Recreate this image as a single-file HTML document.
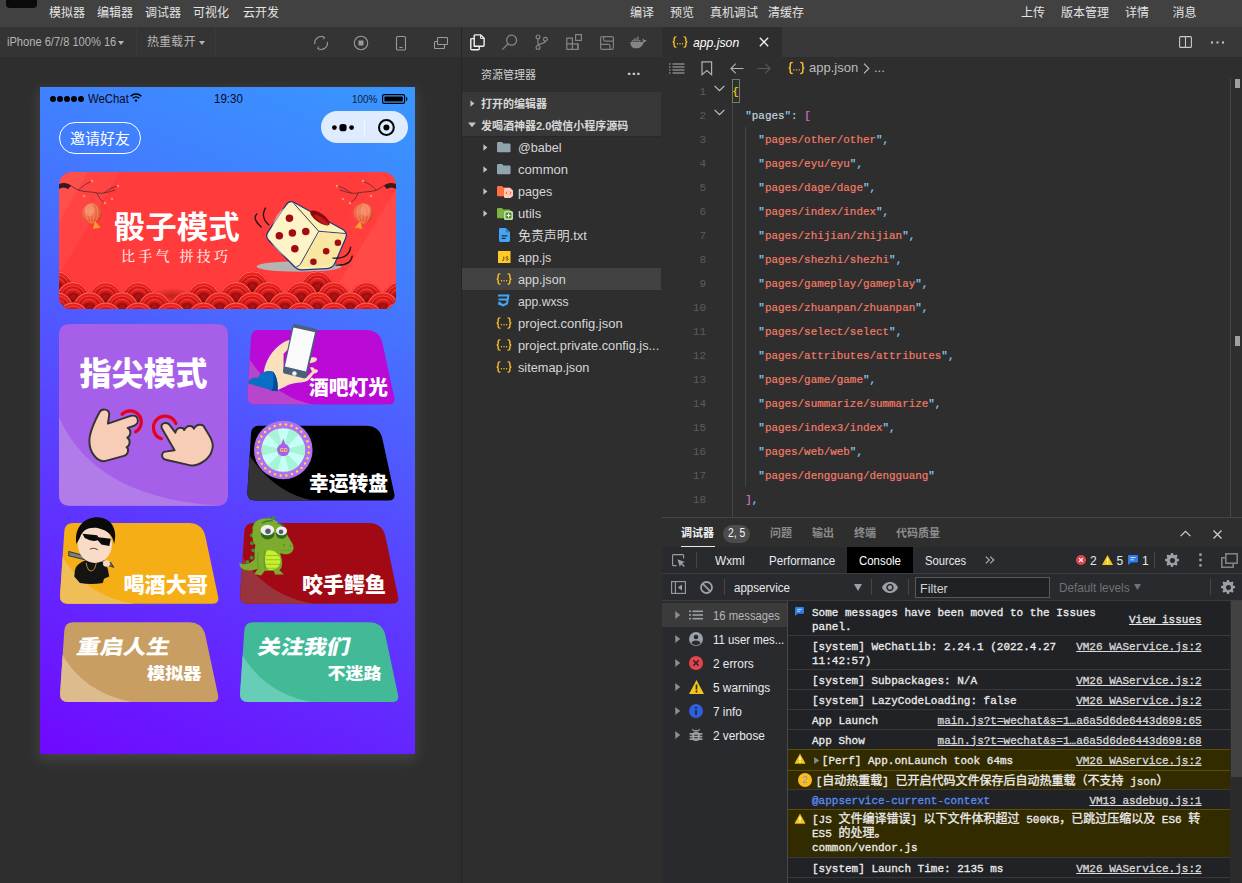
<!DOCTYPE html>
<html lang="zh-CN">
<head>
<meta charset="utf-8">
<title>微信开发者工具</title>
<style>
*{box-sizing:border-box;margin:0;padding:0}
html,body{width:1242px;height:883px;overflow:hidden;background:#2e2e2e}
body{position:relative;font-family:"Liberation Sans","Noto Sans CJK SC",sans-serif;font-size:12px;color:#ccc}
.abs{position:absolute}
.t{position:absolute;white-space:nowrap;line-height:1;transform-origin:0 50%}
svg{position:absolute;overflow:visible}
/* menubar */
#menubar{position:absolute;left:0;top:0;width:1242px;height:27px;background:#414141}
#menubar .t{top:7px;font-size:12px;color:#e4e4e4;line-height:13px}
/* simulator toolbar */
#simbar{position:absolute;left:0;top:27px;width:461px;height:30px;background:#343434}
#simbar .t{font-size:12px;color:#b4b4b4;top:9px;line-height:13px}
.tri{position:absolute;width:0;height:0;border-left:3.5px solid transparent;border-right:3.5px solid transparent;border-top:4.5px solid #b4b4b4}
#vsep{position:absolute;left:461px;top:27px;width:1px;height:856px;background:#252525}
/* explorer */
#actbar{position:absolute;left:462px;top:27px;width:200px;height:30px;background:#343434}
#explorer{position:absolute;left:462px;top:57px;width:199px;height:826px;background:#2e2e2e}
#explorer .sec{position:absolute;left:0;width:199px;height:22px;background:#383838}
#explorer .sec .t{left:19px;top:4.5px;font-size:12px;font-weight:bold;color:#d8d8d8;line-height:14px}
#explorer .row{position:absolute;left:0;width:199px;height:22px}
#explorer .row.sel{background:#424242}
#explorer .row .t{left:56px;top:4px;font-size:13px;color:#d6d6d6;line-height:15px}
/* editor */
#tabbar{position:absolute;left:662px;top:27px;width:580px;height:30px;background:#383838}
#tab{position:absolute;left:0;top:0;width:120px;height:30px;background:#2e2e2e}
#crumbs{position:absolute;left:662px;top:57px;width:580px;height:22px;background:#2e2e2e}
#code{position:absolute;left:662px;top:79px;width:580px;height:438px;background:#2e2e2e;overflow:hidden}
.ln{position:absolute;left:0;width:44px;text-align:right;font-family:"Liberation Mono",monospace;font-size:11px;color:#5c5c5c;line-height:24px;height:24px}
.cl{position:absolute;font-family:"Liberation Mono",monospace;font-size:10.9px;line-height:24px;height:24px;white-space:pre;color:#d4d4d4;-webkit-text-stroke:.2px}
.k{color:#c4d4dc}.q{color:#8ccff5}.s{color:#f47b67}.p{color:#d4d4d4}.b{color:#da70d6}
/* debugger */
#dbg{position:absolute;left:662px;top:517px;width:580px;height:366px;background:#2e2e2e;border-top:1px solid #454545}
#dbg .t{font-size:12px}
.mono{font-family:"Liberation Mono","Noto Sans CJK SC",monospace}
.crow{position:absolute;left:125.6px;width:442.4px;border-top:1px solid #38393c}
.crow.w{background:#332b00;border-top:1px solid #5e4e00;border-bottom:1px solid #5e4e00}
.crow.nb{border-bottom:0}
.crow .m{position:absolute;left:24.4px;margin-top:.6px;font-family:"Liberation Mono","Noto Sans CJK SC",monospace;font-size:11px;line-height:14px;color:#ececec;white-space:pre;-webkit-text-stroke:.3px}
.crow .l{position:absolute;right:28.4px;margin-top:.6px;font-family:"Liberation Mono",monospace;font-size:11px;line-height:14px;color:#d8d8d8;white-space:pre;text-decoration:underline;-webkit-text-stroke:.3px}
.srow{position:absolute;left:0;width:124.6px;height:24px}
.srow .t{left:51px;top:6px;font-size:12.5px;color:#e0e0e0;line-height:15px;transform:scaleX(.985)}
.crow .c{font-size:12px}
#phone{position:absolute;left:40px;top:87px;width:375px;height:667px;overflow:hidden;background:linear-gradient(204deg,#3898ff 0%,#427cff 25%,#5a40ff 61%,#7008ff 100%);}
#phshadow{position:absolute;left:40px;top:87px;width:375px;height:667px;box-shadow:0 5px 12px 2px rgba(255,255,255,.10)}
#phone .w{color:#fff;font-weight:900;font-family:"Liberation Sans","Noto Sans CJK SC",sans-serif}
</style>
</head>
<body>

<div id="menubar">
  <div class="abs" style="left:6px;top:-8px;width:31px;height:16px;border-radius:4px;background:#0a0a0a"></div>
  <span class="t" style="left:49px">模拟器</span>
  <span class="t" style="left:97px">编辑器</span>
  <span class="t" style="left:145px">调试器</span>
  <span class="t" style="left:193px">可视化</span>
  <span class="t" style="left:243px">云开发</span>
  <span class="t" style="left:630px">编译</span>
  <span class="t" style="left:670px">预览</span>
  <span class="t" style="left:710px">真机调试</span>
  <span class="t" style="left:768px">清缓存</span>
  <span class="t" style="left:1021px">上传</span>
  <span class="t" style="left:1061px">版本管理</span>
  <span class="t" style="left:1125px">详情</span>
  <span class="t" style="left:1172.6px">消息</span>
</div>
<div id="simbar">
  <span class="t" style="left:7px;transform:scaleX(.925)">iPhone 6/7/8 100% 16</span>
  <i class="tri" style="left:118px;top:13.5px"></i>
  <div class="abs" style="left:136px;top:0;width:1px;height:30px;background:#3a3a3a"></div>
  <span class="t" style="left:147px;word-spacing:-2.6px">热重载 开</span>
  <i class="tri" style="left:198.5px;top:14px"></i>
  <div class="abs" style="left:215px;top:0;width:1px;height:30px;background:#3a3a3a"></div>
  <!-- refresh -->
  <svg style="left:313px;top:8px" width="16" height="16" viewBox="0 0 16 16" fill="none" stroke="#9a9a9a" stroke-width="1.1">
    <path d="M1.9 9.2A6.3 6.3 0 0 1 11.4 2.6"/><path d="M14.3 6.8A6.3 6.3 0 0 1 4.8 13.4"/>
    <path d="M9.8 1.3l1.9 1.3l-1.2 1.9" stroke-width=".9"/><path d="M6.4 14.7l-1.9-1.3l1.2-1.9" stroke-width=".9"/>
  </svg>
  <!-- stop -->
  <svg style="left:353px;top:8px" width="16" height="16" viewBox="0 0 16 16" fill="none" stroke="#9a9a9a" stroke-width="1.1">
    <circle cx="8" cy="8" r="6.7"/><rect x="5.5" y="5.5" width="5" height="5" fill="#9a9a9a" stroke="none"/>
  </svg>
  <!-- phone -->
  <svg style="left:393px;top:8px" width="16" height="16" viewBox="0 0 16 16" fill="none" stroke="#9a9a9a" stroke-width="1.1">
    <rect x="3.5" y="1.5" width="9" height="13.5" rx="1.3"/><path d="M6.3 12.5h3.4"/>
  </svg>
  <!-- windows -->
  <svg style="left:433px;top:8px" width="16" height="16" viewBox="0 0 16 16" fill="none" stroke="#9a9a9a" stroke-width="1.1">
    <rect x="4.5" y="2.5" width="10" height="7" rx="0.8"/><path d="M4.5 6.5h-2.2a.8.8 0 0 0-.8.8v5.4a.8.8 0 0 0 .8.8h8.4a.8.8 0 0 0 .8-.8v-2.7"/>
  </svg>
</div>
<div id="vsep"></div>
<div id="actbar">
  <!-- files (active) : abs x 470-485, y 34-50 -->
  <svg style="left:7px;top:7px" width="17" height="17" viewBox="0 0 17 17" fill="none" stroke="#f2f2f2" stroke-width="1.4" stroke-linejoin="round">
    <path d="M5.2 12.2V1.8a.9.9 0 0 1 .9-.9h5.6l3.4 3.4v7a.9.9 0 0 1-.9.9z"/>
    <path d="M11.6 1v3.4h3.4" stroke-width="1"/>
    <path d="M5.2 4.6H2.7a.9.9 0 0 0-.9.9v9.3a.9.9 0 0 0 .9.9h6.6a.9.9 0 0 0 .9-.9v-2.6"/>
  </svg>
  <!-- search : circle centre abs (511.6,40.2) -->
  <svg style="left:39px;top:7px" width="17" height="17" viewBox="0 0 17 17" fill="none" stroke="#858585" stroke-width="1.3">
    <circle cx="10.6" cy="6.2" r="5"/><path d="M7 9.8L1.4 15.6"/>
  </svg>
  <!-- git -->
  <svg style="left:71px;top:7px" width="17" height="17" viewBox="0 0 17 17" fill="none" stroke="#858585" stroke-width="1.2">
    <circle cx="5" cy="2.9" r="1.9"/><circle cx="5" cy="13.4" r="1.9"/><circle cx="12.4" cy="5.2" r="1.9"/>
    <path d="M5 4.8v6.7"/><path d="M12.4 7.1c0 3.4-7.2 1.6-7.4 4.6"/>
  </svg>
  <!-- extensions -->
  <svg style="left:103px;top:7px" width="17" height="17" viewBox="0 0 17 17" fill="none" stroke="#858585" stroke-width="1.2">
    <path d="M1.8 4.2h5.6v11.2h-5.6zM1.8 9.8h11.2v5.6h-5.6"/><path d="M13 9.8v5.6"/>
    <rect x="10.6" y=".6" width="5.8" height="5.8"/>
  </svg>
  <!-- save -->
  <svg style="left:138px;top:9px" width="14" height="14" viewBox="0 0 14 14" fill="none" stroke="#808080" stroke-width="1.2">
    <rect x=".6" y=".6" width="12.8" height="12.8" rx="1.4"/><path d="M3.7.6v2.8a1.7 1.7 0 0 0 1.7 1.7h8"/><path d="M.6 8.3h7.7a1.7 1.7 0 0 1 1.7 1.7v3.4"/>
  </svg>
  <!-- docker whale -->
  <svg style="left:167.6px;top:9px" width="17" height="12.5" viewBox="0 0 17 12.5" fill="#858585" stroke="none">
    <path d="M.3 5.9h11.6c.6-.1.9-.5 1-1c-.5-.8-.4-1.7.2-2.4c.7.4 1 1 1.1 1.7c.8-.2 1.6-.1 2.3.3c-.4 1-1.3 1.5-2.5 1.4c-1.1 3.6-3.6 6.4-7.6 6.4c-4.2 0-6.1-2.6-6.1-6.4z"/><rect x="1.8" y="4.1" width="1.5" height="1.4"/><rect x="3.6" y="4.1" width="1.5" height="1.4"/><rect x="5.4" y="4.1" width="1.5" height="1.4"/><rect x="7.2" y="4.1" width="1.5" height="1.4"/><rect x="9" y="4.1" width="1.5" height="1.4"/><rect x="3.6" y="2.4" width="1.5" height="1.4"/><rect x="5.4" y="2.4" width="1.5" height="1.4"/><rect x="7.2" y="2.4" width="1.5" height="1.4"/><rect x="7.2" y="0.7" width="1.5" height="1.4"/>
  </svg>
</div>

<div id="explorer">
<span class="t" style="left:19px;top:12px;font-size:11px;color:#d0d0d0;line-height:13px">资源管理器</span>
<span class="t" style="left:165px;top:6px;font-size:15px;font-weight:bold;color:#d0d0d0;letter-spacing:0.5px;line-height:13px">...</span>
<div class="sec" style="top:35px"><svg style="left:8px;top:7.5px" width="5" height="7" viewBox="0 0 6 8"><path d="M.5 0L5.2 4L.5 8z" fill="#c5c5c5"/></svg><span class="t" style="font-size:11px">打开的编辑器</span></div>
<div class="abs" style="left:0;top:56.5px;width:199px;height:1px;background:#303030"></div>
<div class="sec" style="top:57px"><svg style="left:6px;top:8px" width="8" height="6" viewBox="0 0 8 6"><path d="M0 .5L4 5.2L8 .5z" fill="#c5c5c5"/></svg><span class="t" style="font-size:11px">发喝酒神器2.0微信小程序源码</span></div>
<div class="abs" style="left:0;top:79px;width:199px;height:2px;background:linear-gradient(#272727,#2e2e2e)"></div>
<div class="row" style="top:79px"><svg style="left:21px;top:7.5px" width="5" height="7" viewBox="0 0 6 8"><path d="M.5 0L5.2 4L.5 8z" fill="#c5c5c5"/></svg><svg style="left:35px;top:6px" width="14" height="11" viewBox="0 0 15 12" preserveAspectRatio="none"><path d="M1.2 0h4.2l1.5 1.6h6.4a1.2 1.2 0 0 1 1.2 1.2v7.2a1.2 1.2 0 0 1-1.2 1.2h-12.1a1.2 1.2 0 0 1-1.2-1.2v-8.8a1.2 1.2 0 0 1 1.2-1.2z" fill="#90a4ae"/></svg><span class="t" style="transform:scaleX(0.967)">@babel</span></div>
<div class="row" style="top:101px"><svg style="left:21px;top:7.5px" width="5" height="7" viewBox="0 0 6 8"><path d="M.5 0L5.2 4L.5 8z" fill="#c5c5c5"/></svg><svg style="left:35px;top:6px" width="14" height="11" viewBox="0 0 15 12" preserveAspectRatio="none"><path d="M1.2 0h4.2l1.5 1.6h6.4a1.2 1.2 0 0 1 1.2 1.2v7.2a1.2 1.2 0 0 1-1.2 1.2h-12.1a1.2 1.2 0 0 1-1.2-1.2v-8.8a1.2 1.2 0 0 1 1.2-1.2z" fill="#90a4ae"/></svg><span class="t" style="transform:scaleX(1.006)">common</span></div>
<div class="row" style="top:123px"><svg style="left:21px;top:7.5px" width="5" height="7" viewBox="0 0 6 8"><path d="M.5 0L5.2 4L.5 8z" fill="#c5c5c5"/></svg><svg style="left:35px;top:6px" width="14" height="11" viewBox="0 0 15 12" preserveAspectRatio="none"><path d="M1.2 0h4.2l1.5 1.6h6.4a1.2 1.2 0 0 1 1.2 1.2v7.2a1.2 1.2 0 0 1-1.2 1.2h-12.1a1.2 1.2 0 0 1-1.2-1.2v-8.8a1.2 1.2 0 0 1 1.2-1.2z" fill="#ff7043"/></svg><svg style="left:42px;top:8px" width="9" height="10" viewBox="0 0 9 10"><path d="M1.2 0h5.2l2.6 2.4v5.6l-2.6 2h-5.2a1.2 1.2 0 0 1-1.2-1.2v-7.6a1.2 1.2 0 0 1 1.2-1.2z" fill="#ffccbc"/><path d="M3.4 3.6l-1.5 1.4l1.5 1.4M5.6 3.6l1.5 1.4l-1.5 1.4" stroke="#ff5722" stroke-width=".9" fill="none"/></svg><span class="t" style="transform:scaleX(0.966)">pages</span></div>
<div class="row" style="top:145px"><svg style="left:21px;top:7.5px" width="5" height="7" viewBox="0 0 6 8"><path d="M.5 0L5.2 4L.5 8z" fill="#c5c5c5"/></svg><svg style="left:35px;top:6px" width="14" height="11" viewBox="0 0 15 12" preserveAspectRatio="none"><path d="M1.2 0h4.2l1.5 1.6h6.4a1.2 1.2 0 0 1 1.2 1.2v7.2a1.2 1.2 0 0 1-1.2 1.2h-12.1a1.2 1.2 0 0 1-1.2-1.2v-8.8a1.2 1.2 0 0 1 1.2-1.2z" fill="#7cb342"/></svg><svg style="left:42px;top:9px" width="9" height="9" viewBox="0 0 9 9"><rect width="9" height="9" rx="1.6" fill="#c5e1a5"/><rect x="1.6" y="1.6" width="5.8" height="5.8" rx=".8" fill="#558b2f"/><path d="M4.5 2.6v3.8M2.6 4.5h3.8" stroke="#fff" stroke-width="1.1"/></svg><span class="t" style="transform:scaleX(1.004)">utils</span></div>
<div class="row" style="top:167px"><svg style="left:37px;top:4px" width="11" height="14" viewBox="0 0 11 14"><path d="M1.4 0h5.6l4 4v8.6a1.4 1.4 0 0 1-1.4 1.4h-8.2a1.4 1.4 0 0 1-1.4-1.4v-11.2a1.4 1.4 0 0 1 1.4-1.4z" fill="#42a5f5"/><path d="M6.6.8v3.6h3.6" fill="#2e2e2e" opacity=".0"/><path d="M2.6 7.8h5.8M2.6 10.4h4" stroke="#2e2e2e" stroke-width="1.3"/><path d="M6.8 0v4.2h4.2z" fill="#2e2e2e" opacity=".35"/></svg><span class="t" style="transform:scaleX(0.993)">免责声明.txt</span></div>
<div class="row" style="top:189px"><svg style="left:35.7px;top:5px" width="12.5" height="12" viewBox="0 0 13 12" preserveAspectRatio="none"><rect width="13" height="12" fill="#ffca28"/><path d="M6 5.6v3.2c0 .9-1.2 1-1.7.3M10.6 6.1c-.7-.7-2.2-.5-2.2.4c0 1 2.3.7 2.3 1.8c0 1-1.7 1.1-2.5.3" stroke="#4e3c00" stroke-width=".9" fill="none"/></svg><span class="t" style="transform:scaleX(0.96)">app.js</span></div>
<div class="row sel" style="top:211px"><svg style="left:33.6px;top:4px" width="16" height="14" viewBox="0 0 18 14" fill="none" stroke="#f4bb2e" stroke-width="1.6" stroke-linecap="round">
<path d="M4.4 1.2c-1.6 0-2 .6-2 1.8v2.2c0 1-.5 1.6-1.5 1.8c1 .2 1.5.8 1.5 1.8v2.2c0 1.2.4 1.8 2 1.8"/>
<path d="M13.6 1.2c1.6 0 2 .6 2 1.8v2.2c0 1 .5 1.6 1.5 1.8c-1 .2-1.5.8-1.5 1.8v2.2c0 1.2-.4 1.8-2 1.8"/>
<path d="M6.1 9h.1M9 9h.1M11.9 9h.1" stroke-width="1.5"/></svg><span class="t" style="transform:scaleX(0.97)">app.json</span></div>
<div class="row" style="top:233px"><svg style="left:34.2px;top:4px" width="14" height="13" viewBox="0 0 14 13"><path d="M2.2.4h11.4l-1.7 9.8l-4.6 2.4l-5.4-2.2l.5-2.6h2.3l-.2 1l3 1.2l2.6-1.2l.4-2.2h-8.2l.4-2.2h8.2l.3-1.8h-9.4z" fill="#42a5f5"/></svg><span class="t" style="transform:scaleX(0.935)">app.wxss</span></div>
<div class="row" style="top:255px"><svg style="left:33.6px;top:4px" width="16" height="14" viewBox="0 0 18 14" fill="none" stroke="#f4bb2e" stroke-width="1.6" stroke-linecap="round">
<path d="M4.4 1.2c-1.6 0-2 .6-2 1.8v2.2c0 1-.5 1.6-1.5 1.8c1 .2 1.5.8 1.5 1.8v2.2c0 1.2.4 1.8 2 1.8"/>
<path d="M13.6 1.2c1.6 0 2 .6 2 1.8v2.2c0 1 .5 1.6 1.5 1.8c-1 .2-1.5.8-1.5 1.8v2.2c0 1.2-.4 1.8-2 1.8"/>
<path d="M6.1 9h.1M9 9h.1M11.9 9h.1" stroke-width="1.5"/></svg><span class="t" style="transform:scaleX(0.999)">project.config.json</span></div>
<div class="row" style="top:277px"><svg style="left:33.6px;top:4px" width="16" height="14" viewBox="0 0 18 14" fill="none" stroke="#f4bb2e" stroke-width="1.6" stroke-linecap="round">
<path d="M4.4 1.2c-1.6 0-2 .6-2 1.8v2.2c0 1-.5 1.6-1.5 1.8c1 .2 1.5.8 1.5 1.8v2.2c0 1.2.4 1.8 2 1.8"/>
<path d="M13.6 1.2c1.6 0 2 .6 2 1.8v2.2c0 1 .5 1.6 1.5 1.8c-1 .2-1.5.8-1.5 1.8v2.2c0 1.2-.4 1.8-2 1.8"/>
<path d="M6.1 9h.1M9 9h.1M11.9 9h.1" stroke-width="1.5"/></svg><span class="t" style="transform:scaleX(0.982)">project.private.config.js...</span></div>
<div class="row" style="top:299px"><svg style="left:33.6px;top:4px" width="16" height="14" viewBox="0 0 18 14" fill="none" stroke="#f4bb2e" stroke-width="1.6" stroke-linecap="round">
<path d="M4.4 1.2c-1.6 0-2 .6-2 1.8v2.2c0 1-.5 1.6-1.5 1.8c1 .2 1.5.8 1.5 1.8v2.2c0 1.2.4 1.8 2 1.8"/>
<path d="M13.6 1.2c1.6 0 2 .6 2 1.8v2.2c0 1 .5 1.6 1.5 1.8c-1 .2-1.5.8-1.5 1.8v2.2c0 1.2-.4 1.8-2 1.8"/>
<path d="M6.1 9h.1M9 9h.1M11.9 9h.1" stroke-width="1.5"/></svg><span class="t" style="transform:scaleX(0.978)">sitemap.json</span></div>
</div>
<div id="tabbar"><div id="tab">
<svg style="left:10px;top:8px" width="16" height="14" viewBox="0 0 18 14" fill="none" stroke="#f4bb2e" stroke-width="1.6" stroke-linecap="round">
<path d="M4.4 1.2c-1.6 0-2 .6-2 1.8v2.2c0 1-.5 1.6-1.5 1.8c1 .2 1.5.8 1.5 1.8v2.2c0 1.2.4 1.8 2 1.8"/>
<path d="M13.6 1.2c1.6 0 2 .6 2 1.8v2.2c0 1 .5 1.6 1.5 1.8c-1 .2-1.5.8-1.5 1.8v2.2c0 1.2-.4 1.8-2 1.8"/>
<path d="M6.1 9h.1M9 9h.1M11.9 9h.1" stroke-width="1.5"/></svg>
<span class="t" style="left:31px;top:8px;font-size:13px;font-style:italic;color:#fff;line-height:15px;transform:scaleX(.94)">app.json</span>
<svg style="left:97.3px;top:10px" width="10" height="10" viewBox="0 0 10 10" stroke="#f0f0f0" stroke-width="1.3" fill="none"><path d="M.8.8l8.4 8.4M9.2.8L.8 9.2"/></svg>
</div>
<svg style="left:517px;top:9px" width="13" height="12" viewBox="0 0 13 12" fill="none" stroke="#c8c8c8" stroke-width="1.1"><rect x=".6" y=".6" width="11.8" height="10.8" rx="1"/><path d="M6.5 .6v10.8"/></svg>
<svg style="left:549px;top:14px" width="14" height="3" viewBox="0 0 14 3" fill="#c8c8c8"><rect x="0" y=".5" width="2" height="2"/><rect x="5.5" y=".5" width="2" height="2"/><rect x="11" y=".5" width="2" height="2"/></svg>
</div>
<div id="crumbs">
<svg style="left:7px;top:6px" width="16" height="11" viewBox="0 0 16 11" stroke="#b0b0b0" stroke-width="1" fill="none"><path d="M3.5 1h12M3.5 4h12M3.5 7h12M3.5 10h12M0 1h1.5M0 4h1.5M0 7h1.5M0 10h1.5"/></svg>
<svg style="left:39px;top:4px" width="12" height="15" viewBox="0 0 12 15" stroke="#b0b0b0" stroke-width="1.2" fill="none" stroke-linejoin="miter"><path d="M1 .8h9.6v13l-4.8-4.2l-4.8 4.2z"/></svg>
<svg style="left:68px;top:6px" width="14" height="11" viewBox="0 0 14 11" stroke="#b0b0b0" stroke-width="1.1" fill="none"><path d="M13.5 5.5H1M5.8 .6L.9 5.5l4.9 4.9"/></svg>
<svg style="left:95px;top:6px" width="14" height="11" viewBox="0 0 14 11" stroke="#5a5a5a" stroke-width="1.1" fill="none"><path d="M.5 5.5H13M8.2 .6l4.9 4.9l-4.9 4.9"/></svg>
<svg style="left:126px;top:4px" width="17" height="14" viewBox="0 0 18 14" fill="none" stroke="#f4bb2e" stroke-width="1.6" stroke-linecap="round">
<path d="M4.4 1.2c-1.6 0-2 .6-2 1.8v2.2c0 1-.5 1.6-1.5 1.8c1 .2 1.5.8 1.5 1.8v2.2c0 1.2.4 1.8 2 1.8"/>
<path d="M13.6 1.2c1.6 0 2 .6 2 1.8v2.2c0 1 .5 1.6 1.5 1.8c-1 .2-1.5.8-1.5 1.8v2.2c0 1.2-.4 1.8-2 1.8"/>
<path d="M6.1 9h.1M9 9h.1M11.9 9h.1" stroke-width="1.5"/></svg>
<span class="t" style="left:147px;top:3px;font-size:13px;color:#bdbdbd;line-height:15px">app.json</span>
<svg style="left:201px;top:6px" width="7" height="11" viewBox="0 0 7 11" stroke="#bdbdbd" stroke-width="1.1" fill="none"><path d="M1 .7l4.8 4.8L1 10.3"/></svg>
<span class="t" style="left:212px;top:3px;font-size:13px;color:#bdbdbd;line-height:15px">...</span>
</div>
<div id="code">
<div class="abs" style="left:70px;top:0;width:7.5px;height:24px;border:1px solid #777;background:rgba(0,100,0,.1)"></div>
<div class="abs" style="left:70px;top:24px;width:1px;height:420px;background:#454545"></div>
<div class="abs" style="left:83px;top:48px;width:1px;height:360px;background:#454545"></div>
<div class="ln" style="top:0.5px">1</div>
<div class="cl" style="left:70.2px;top:1px"><span style="color:#ffd700">{</span></div>
<div class="ln" style="top:24.5px">2</div>
<div class="cl" style="left:70.2px;top:25px">  <span class="q">"</span><span class="k">pages</span><span class="q">":</span> <span class="b">[</span></div>
<div class="ln" style="top:48.5px">3</div>
<div class="cl" style="left:70.2px;top:49px">    <span class="q">"</span><span class="s">pages/other/other</span><span class="q">"</span><span class="q">,</span></div>
<div class="ln" style="top:72.5px">4</div>
<div class="cl" style="left:70.2px;top:73px">    <span class="q">"</span><span class="s">pages/eyu/eyu</span><span class="q">"</span><span class="q">,</span></div>
<div class="ln" style="top:96.5px">5</div>
<div class="cl" style="left:70.2px;top:97px">    <span class="q">"</span><span class="s">pages/dage/dage</span><span class="q">"</span><span class="q">,</span></div>
<div class="ln" style="top:120.5px">6</div>
<div class="cl" style="left:70.2px;top:121px">    <span class="q">"</span><span class="s">pages/index/index</span><span class="q">"</span><span class="q">,</span></div>
<div class="ln" style="top:144.5px">7</div>
<div class="cl" style="left:70.2px;top:145px">    <span class="q">"</span><span class="s">pages/zhijian/zhijian</span><span class="q">"</span><span class="q">,</span></div>
<div class="ln" style="top:168.5px">8</div>
<div class="cl" style="left:70.2px;top:169px">    <span class="q">"</span><span class="s">pages/shezhi/shezhi</span><span class="q">"</span><span class="q">,</span></div>
<div class="ln" style="top:192.5px">9</div>
<div class="cl" style="left:70.2px;top:193px">    <span class="q">"</span><span class="s">pages/gameplay/gameplay</span><span class="q">"</span><span class="q">,</span></div>
<div class="ln" style="top:216.5px">10</div>
<div class="cl" style="left:70.2px;top:217px">    <span class="q">"</span><span class="s">pages/zhuanpan/zhuanpan</span><span class="q">"</span><span class="q">,</span></div>
<div class="ln" style="top:240.5px">11</div>
<div class="cl" style="left:70.2px;top:241px">    <span class="q">"</span><span class="s">pages/select/select</span><span class="q">"</span><span class="q">,</span></div>
<div class="ln" style="top:264.5px">12</div>
<div class="cl" style="left:70.2px;top:265px">    <span class="q">"</span><span class="s">pages/attributes/attributes</span><span class="q">"</span><span class="q">,</span></div>
<div class="ln" style="top:288.5px">13</div>
<div class="cl" style="left:70.2px;top:289px">    <span class="q">"</span><span class="s">pages/game/game</span><span class="q">"</span><span class="q">,</span></div>
<div class="ln" style="top:312.5px">14</div>
<div class="cl" style="left:70.2px;top:313px">    <span class="q">"</span><span class="s">pages/summarize/summarize</span><span class="q">"</span><span class="q">,</span></div>
<div class="ln" style="top:336.5px">15</div>
<div class="cl" style="left:70.2px;top:337px">    <span class="q">"</span><span class="s">pages/index3/index</span><span class="q">"</span><span class="q">,</span></div>
<div class="ln" style="top:360.5px">16</div>
<div class="cl" style="left:70.2px;top:361px">    <span class="q">"</span><span class="s">pages/web/web</span><span class="q">"</span><span class="q">,</span></div>
<div class="ln" style="top:384.5px">17</div>
<div class="cl" style="left:70.2px;top:385px">    <span class="q">"</span><span class="s">pages/dengguang/dengguang</span><span class="q">"</span></div>
<div class="ln" style="top:408.5px">18</div>
<div class="cl" style="left:70.2px;top:409px">  <span class="b">]</span><span class="q">,</span></div>
<svg style="left:52px;top:6px" width="11" height="7" viewBox="0 0 11 7" stroke="#c5c5c5" stroke-width="1.1" fill="none"><path d="M.6 .8l4.9 4.9l4.9-4.9"/></svg>
<svg style="left:52px;top:30px" width="11" height="7" viewBox="0 0 11 7" stroke="#c5c5c5" stroke-width="1.1" fill="none"><path d="M.6 .8l4.9 4.9l4.9-4.9"/></svg>
<div class="abs" style="left:568px;top:0;width:1px;height:438px;background:#484848"></div>
<div class="abs" style="left:573px;top:0;width:5px;height:9px;background:#a0a0a0"></div>
<div class="abs" style="left:573px;top:257px;width:5px;height:10px;background:#a0a0a0"></div>
</div>
<div id="dbg">
<span class="t" style="left:19px;top:9px;font-size:11px;font-weight:bold;color:#f0f0f0;line-height:13px">调试器</span>
<div class="abs" style="left:19px;top:28px;width:34px;height:1px;background:#e8e8e8"></div>
<div class="abs" style="left:61px;top:6.5px;width:27px;height:18px;border-radius:9px;background:#4c4c4c"></div>
<span class="t" style="left:65.6px;top:8.6px;font-size:12px;color:#f4f4f4;line-height:13px;transform:scaleX(.86)">2, 5</span>
<span class="t" style="left:108px;top:9px;font-size:11px;font-weight:bold;color:#8c8c8c;line-height:13px">问题</span>
<span class="t" style="left:150px;top:9px;font-size:11px;font-weight:bold;color:#8c8c8c;line-height:13px">输出</span>
<span class="t" style="left:192px;top:9px;font-size:11px;font-weight:bold;color:#8c8c8c;line-height:13px">终端</span>
<span class="t" style="left:234px;top:9px;font-size:11px;font-weight:bold;color:#8c8c8c;line-height:13px">代码质量</span>
<svg style="left:518px;top:12px" width="11" height="7" viewBox="0 0 11 7" stroke="#d0d0d0" stroke-width="1.2" fill="none"><path d="M.6 6.2l4.9-4.9l4.9 4.9"/></svg>
<svg style="left:551px;top:12px" width="9" height="9" viewBox="0 0 9 9" stroke="#d0d0d0" stroke-width="1.2" fill="none"><path d="M.5.5l8 8M8.5.5l-8 8"/></svg>
<div class="abs" style="left:0;top:29px;width:580px;height:27px;background:#292a2d;border-bottom:1px solid #3d3d3d"></div>
<svg style="left:10px;top:36px" width="14" height="14" viewBox="0 0 14 14" fill="none" stroke="#9aa0a6" stroke-width="1.1"><path d="M11.6 4.4V1.3a.7.7 0 0 0-.7-.7H1.3a.7.7 0 0 0-.7.7v9.6a.7.7 0 0 0 .7.7h3.1"/><path d="M5.4 5.2l2.4 7.6l1.4-2.6l2.6 2.8l1-1l-2.7-2.7l2.6-1.4z" fill="#9aa0a6" stroke="none"/></svg>
<div class="abs" style="left:33.8px;top:34px;width:1px;height:16px;background:#46474a"></div>
<div class="abs" style="left:185px;top:29px;width:66px;height:26px;background:#000"></div>
<span class="t" style="left:53px;top:36px;font-size:12px;color:#e8eaed;line-height:14px;transform:scaleX(0.985)">Wxml</span>
<span class="t" style="left:107px;top:36px;font-size:12px;color:#e8eaed;line-height:14px;transform:scaleX(0.963)">Performance</span>
<span class="t" style="left:197px;top:36px;font-size:12px;color:#fff;line-height:14px;transform:scaleX(0.953)">Console</span>
<span class="t" style="left:263px;top:36px;font-size:12px;color:#e8eaed;line-height:14px;transform:scaleX(0.935)">Sources</span>
<svg style="left:323px;top:38px" width="10" height="8" viewBox="0 0 10 8" stroke="#b0b3b8" stroke-width="1.1" fill="none"><path d="M.8.6l3.6 3.4l-3.6 3.4M5.2.6l3.6 3.4l-3.6 3.4"/></svg>
<svg style="left:414px;top:37px" width="10" height="10" viewBox="0 0 10 10"><circle cx="5" cy="5" r="5" fill="#e8434d"/><path d="M3.1 3.1l3.8 3.8M6.9 3.1l-3.8 3.8" stroke="#fff" stroke-width="1.3"/></svg>
<span class="t" style="left:428px;top:36px;font-size:12px;color:#e8eaed;line-height:14px">2</span>
<svg style="left:439.5px;top:37px" width="11" height="10" viewBox="0 0 11 10"><path d="M5.5 0L11 10H0z" fill="#f5c518"/><path d="M5.5 3.4v3.2M5.5 7.6v1.2" stroke="#fff" stroke-width="1.3"/></svg>
<span class="t" style="left:454.5px;top:36px;font-size:12px;color:#e8eaed;line-height:14px">5</span>
<svg style="left:466px;top:37px" width="10" height="10" viewBox="0 0 10 10"><path d="M1 0h8a1 1 0 0 1 1 1v5.6a1 1 0 0 1-1 1H3L0 10V1a1 1 0 0 1 1-1z" fill="#2b7de9"/><path d="M2.4 2.6h5.2M2.4 4.8h3.4" stroke="#d6e6ff" stroke-width="1"/></svg>
<span class="t" style="left:480px;top:36px;font-size:12px;color:#e8eaed;line-height:14px">1</span>
<div class="abs" style="left:491.5px;top:34px;width:1px;height:16px;background:#46474a"></div>
<svg style="left:502.5px;top:34.5px" width="15" height="15" viewBox="0 0 16 16" fill="#9aa0a6"><path d="M7.5 0h1l.5 1.9l1.4.6l1.7-1l1.4 1.4l-1 1.7l.6 1.4l1.9.5v2l-1.9.5l-.6 1.4l1 1.7l-1.4 1.4l-1.7-1l-1.4.6l-.5 1.9h-2l-.5-1.9l-1.4-.6l-1.7 1l-1.4-1.4l1-1.7l-.6-1.4l-1.9-.5v-2l1.9-.5l.6-1.4l-1-1.7l1.4-1.4l1.7 1l1.4-.6l.5-1.9zM8 5.2a2.8 2.8 0 1 0 .001 0z" fill-rule="evenodd"/></svg>
<svg style="left:536.5px;top:35px" width="3" height="14" viewBox="0 0 3 14" fill="#9aa0a6"><circle cx="1.5" cy="1.7" r="1.4"/><circle cx="1.5" cy="7" r="1.4"/><circle cx="1.5" cy="12.3" r="1.4"/></svg>
<svg style="left:559px;top:35px" width="17" height="15" viewBox="0 0 17 15" fill="none" stroke="#7e8185" stroke-width="1.6"><rect x="4.8" y=".8" width="11.4" height="9.4"/><path d="M4.8 4.8H.8v9.4h11.4v-4"/></svg>
<div class="abs" style="left:0;top:56px;width:580px;height:27px;background:#292a2d;border-bottom:1px solid #3d3d3d"></div>
<svg style="left:9px;top:63px" width="15" height="13" viewBox="0 0 15 13" fill="none" stroke="#9aa0a6" stroke-width="1.1"><rect x=".6" y=".6" width="13.8" height="11.8"/><path d="M4.4.6v11.8"/><path d="M11 3.4v6.2l-4.2-3.1z" fill="#9aa0a6" stroke="none"/></svg>
<svg style="left:38px;top:63px" width="13" height="13" viewBox="0 0 13 13" fill="none" stroke="#9aa0a6" stroke-width="1.8"><circle cx="6.5" cy="6.5" r="5.5"/><path d="M2.6 2.6l7.8 7.8"/></svg>
<div class="abs" style="left:62px;top:61px;width:1px;height:16px;background:#46474a"></div>
<span class="t" style="left:72px;top:63px;font-size:12px;color:#e8eaed;line-height:14px;transform:scaleX(.964)">appservice</span>
<svg style="left:192px;top:65.5px" width="8" height="7" viewBox="0 0 8 7"><path d="M0 0h8L4 7z" fill="#9aa0a6"/></svg>
<div class="abs" style="left:209px;top:61px;width:1px;height:16px;background:#46474a"></div>
<svg style="left:220px;top:63.5px" width="16" height="11" viewBox="0 0 16 11"><path d="M8 0C4.4 0 1.4 2.2 0 5.5C1.4 8.8 4.4 11 8 11s6.6-2.2 8-5.5C14.6 2.2 11.6 0 8 0zM8 9.2a3.7 3.7 0 1 1 .001 0zM8 3.3a2.2 2.2 0 1 0 .001 0z" fill="#9aa0a6" fill-rule="evenodd"/></svg>
<div class="abs" style="left:246px;top:61px;width:1px;height:16px;background:#46474a"></div>
<div class="abs" style="left:252.6px;top:58.6px;width:135px;height:21px;background:#202124;border:1px solid #585858"></div>
<span class="t" style="left:258px;top:63.5px;font-size:12.5px;color:#d0d2d6;line-height:14px">Filter</span>
<span class="t" style="left:397px;top:63px;font-size:12.5px;color:#6f7276;line-height:14px;transform:scaleX(.94)">Default levels</span>
<svg style="left:472px;top:65.5px" width="7" height="6" viewBox="0 0 8 7"><path d="M0 0h8L4 7z" fill="#6f7276"/></svg>
<div class="abs" style="left:548px;top:61px;width:1px;height:16px;background:#46474a"></div>
<svg style="left:558.5px;top:61.5px" width="15" height="15" viewBox="0 0 16 16" fill="#9aa0a6"><path d="M7.5 0h1l.5 1.9l1.4.6l1.7-1l1.4 1.4l-1 1.7l.6 1.4l1.9.5v2l-1.9.5l-.6 1.4l1 1.7l-1.4 1.4l-1.7-1l-1.4.6l-.5 1.9h-2l-.5-1.9l-1.4-.6l-1.7 1l-1.4-1.4l1-1.7l-.6-1.4l-1.9-.5v-2l1.9-.5l.6-1.4l-1-1.7l1.4-1.4l1.7 1l1.4-.6l.5-1.9zM8 5.2a2.8 2.8 0 1 0 .001 0z" fill-rule="evenodd"/></svg>
<div class="abs" style="left:0;top:83px;width:580px;height:282px;background:#212226"></div>
<div class="abs" style="left:0;top:83px;width:124.6px;height:282px;background:#292a2d"></div>
<div class="abs" style="left:124.6px;top:83px;width:1px;height:282px;background:#484848"></div>
<div class="abs" style="left:568px;top:83px;width:12px;height:282px;background:#2b2b2b"></div>
<div class="abs" style="left:569px;top:83px;width:11px;height:176px;background:#424242"></div>
<div class="srow" style="top:85px;background:#3b3b3b;"><svg style="left:12.5px;top:8px" width="5.5" height="8" viewBox="0 0 5 8"><path d="M0 0l5 4l-5 4z" fill="#8a8d91"/></svg><svg style="left:27px;top:7px" width="14" height="10" viewBox="0 0 14 10" fill="#9aa0a6"><rect x="0" y="0.5" width="2" height="1.6"/><rect x="3.5" y=".5" width="10.5" height="1.6"/><rect x="0" y="4.2" width="2" height="1.6"/><rect x="3.5" y="4.2" width="10.5" height="1.6"/><rect x="0" y="7.9" width="2" height="1.6"/><rect x="3.5" y="7.9" width="10.5" height="1.6"/></svg><span class="t" style="color:#b4b7bb;transform:scaleX(.938)">16 messages</span></div>
<div class="srow" style="top:109px;"><svg style="left:12.5px;top:8px" width="5.5" height="8" viewBox="0 0 5 8"><path d="M0 0l5 4l-5 4z" fill="#8a8d91"/></svg><svg style="left:27px;top:5px" width="14" height="14" viewBox="0 0 14 14"><circle cx="7" cy="7" r="7" fill="#9aa0a6"/><circle cx="7" cy="5" r="2.3" fill="#292a2d"/><path d="M2.4 11c1-2 2.6-2.6 4.6-2.6s3.6.6 4.6 2.6c-1.2 1.4-2.8 2.2-4.6 2.2s-3.4-.8-4.6-2.2z" fill="#292a2d"/></svg><span class="t" style="color:#e8eaed;transform:scaleX(.948)">11 user mes...</span></div>
<div class="srow" style="top:133px;"><svg style="left:12.5px;top:8px" width="5.5" height="8" viewBox="0 0 5 8"><path d="M0 0l5 4l-5 4z" fill="#8a8d91"/></svg><svg style="left:27px;top:5px" width="14" height="14" viewBox="0 0 14 14"><circle cx="7" cy="7" r="7" fill="#e8434d"/><path d="M4.4 4.4l5.2 5.2M9.6 4.4l-5.2 5.2" stroke="#292a2d" stroke-width="1.5"/></svg><span class="t" style="color:#e8eaed">2 errors</span></div>
<div class="srow" style="top:157px;"><svg style="left:12.5px;top:8px" width="5.5" height="8" viewBox="0 0 5 8"><path d="M0 0l5 4l-5 4z" fill="#8a8d91"/></svg><svg style="left:26.5px;top:5px" width="15" height="14" viewBox="0 0 15 14"><path d="M7.5 0L15 14H0z" fill="#f5c518"/><path d="M7.5 4.6v4.8M7.5 10.6v1.8" stroke="#292a2d" stroke-width="1.7"/></svg><span class="t" style="color:#e8eaed">5 warnings</span></div>
<div class="srow" style="top:181px;"><svg style="left:12.5px;top:8px" width="5.5" height="8" viewBox="0 0 5 8"><path d="M0 0l5 4l-5 4z" fill="#8a8d91"/></svg><svg style="left:27px;top:5px" width="14" height="14" viewBox="0 0 14 14"><circle cx="7" cy="7" r="7" fill="#2e5fe0"/><path d="M7 6v5M7 3v1.8" stroke="#292a2d" stroke-width="1.8"/></svg><span class="t" style="color:#e8eaed">7 info</span></div>
<div class="srow" style="top:205px;"><svg style="left:12.5px;top:8px" width="5.5" height="8" viewBox="0 0 5 8"><path d="M0 0l5 4l-5 4z" fill="#8a8d91"/></svg><svg style="left:27px;top:5px" width="14" height="14" viewBox="0 0 14 14" fill="#9e9e9e"><path d="M4.3 3.6a2.9 2.9 0 0 1 5.4 0z"/><rect x="3.2" y="4" width="7.6" height="9" rx="3.4"/><path d="M.6 5.8h12.8M.6 8.5h12.8M.6 11.2h12.8" stroke="#9e9e9e" stroke-width="1.7"/><path d="M3.2 1.2l1.7 1.7M10.8 1.2l-1.7 1.7" stroke="#9e9e9e" stroke-width="1.2"/><path d="M5.2 7.2h3.6M5.2 9.8h3.6" stroke="#292a2d" stroke-width="1.1"/></svg><span class="t" style="color:#e8eaed">2 verbose</span></div>
<div class="crow " style="top:82px;height:35px"><svg style="left:7px;top:6px" width="9" height="9" viewBox="0 0 10 10"><path d="M1 0h8a1 1 0 0 1 1 1v5.6a1 1 0 0 1-1 1H3L0 10V1a1 1 0 0 1 1-1z" fill="#2b7de9"/><path d="M2.4 2.6h5.2M2.4 4.8h3.4" stroke="#d6e6ff" stroke-width="1"/></svg><span class="m" style="top:4px">Some messages have been moved to the Issues
panel.</span><span class="l" style="top:11px;color:#e6e6e6">View issues</span></div>
<div class="crow " style="top:117px;height:35px"><span class="m" style="top:3px">[system] WeChatLib: 2.24.1 (2022.4.27
11:42:57)</span><span class="l" style="top:3px">VM26 WAService.js:2</span></div>
<div class="crow " style="top:151px;height:20px"><span class="m" style="top:3px">[system] Subpackages: N/A</span><span class="l" style="top:3px">VM26 WAService.js:2</span></div>
<div class="crow " style="top:171px;height:20px"><span class="m" style="top:3px">[system] LazyCodeLoading: false</span><span class="l" style="top:3px">VM26 WAService.js:2</span></div>
<div class="crow " style="top:191px;height:20px"><span class="m" style="top:3px">App Launch</span><span class="l" style="top:3px">main.js?t=wechat&amp;s=1…a6a5d6de6443d698:65</span></div>
<div class="crow " style="top:211px;height:20px"><span class="m" style="top:3px">App Show</span><span class="l" style="top:3px">main.js?t=wechat&amp;s=1…a6a5d6de6443d698:68</span></div>
<div class="crow w nb" style="top:231px;height:20.5px"><svg style="left:7px;top:3.6px" width="10" height="9.6" viewBox="0 0 11 10"><path d="M5.5 0L11 10H0z" fill="#f5c518" stroke="#f5c518" stroke-width=".8" stroke-linejoin="round"/><path d="M5.5 3v3.6M5.5 7.6v1.3" stroke="#fff" stroke-width="1.7"/></svg><svg style="left:26.4px;top:6.5px" width="5.4" height="7" viewBox="0 0 5 7"><path d="M0 0l5 3.5l-5 3.5z" fill="#8a8d91"/></svg><span class="m" style="top:3px;left:34.2px">[Perf] App.onLaunch took 64ms</span><span class="l" style="top:3px">VM26 WAService.js:2</span></div>
<div class="crow w" style="top:251.5px;height:20px"><div class="abs" style="left:10.4px;top:2.5px;width:14px;height:14px;border-radius:7px;background:#fdbc1e"></div><span class="m" style="left:14.2px;top:2.6px;font-size:10px;color:#8a98bc;-webkit-text-stroke:0">2</span><span class="m" style="top:3.6px;left:28.1px">[<span class="c">自动热重载</span>] <span class="c">已开启代码文件保存后自动热重载（不支持</span> json<span class="c">）</span></span></div>
<div class="crow " style="top:271px;height:20px"><span class="m" style="top:3px;color:#5a8dee">@appservice-current-context</span><span class="l" style="top:3px">VM13 asdebug.js:1</span></div>
<div class="crow w" style="top:290.5px;height:49px"><svg style="left:7px;top:4.2px" width="10" height="9.6" viewBox="0 0 11 10"><path d="M5.5 0L11 10H0z" fill="#f5c518" stroke="#f5c518" stroke-width=".8" stroke-linejoin="round"/><path d="M5.5 3v3.6M5.5 7.6v1.3" stroke="#fff" stroke-width="1.7"/></svg><span class="m" style="top:3px">[JS <span class="c">文件编译错误</span>] <span class="c">以下文件体积超过</span> 500KB<span class="c">，已跳过压缩以及</span> ES6 <span class="c">转</span>
ES5 <span class="c">的处理。</span>
common/vendor.js</span></div>
<div class="crow " style="top:339px;height:20px"><span class="m" style="top:3px">[system] Launch Time: 2135 ms</span><span class="l" style="top:3px">VM26 WAService.js:2</span></div>
<div class="crow " style="top:359px;height:10px"></div>
</div>
<div id="phshadow"></div>
<div id="phone">
<div class="abs" style="left:10px;top:8.8px;width:6px;height:6px;border-radius:3px;background:#000"></div>
<div class="abs" style="left:17px;top:8.8px;width:6px;height:6px;border-radius:3px;background:#000"></div>
<div class="abs" style="left:24px;top:8.8px;width:6px;height:6px;border-radius:3px;background:#000"></div>
<div class="abs" style="left:31px;top:8.8px;width:6px;height:6px;border-radius:3px;background:#000"></div>
<div class="abs" style="left:38px;top:8.8px;width:6px;height:6px;border-radius:3px;background:#000"></div>
<span class="t" style="left:48px;top:4.8px;font-size:12px;color:#0a0a1a;line-height:15px;transform:scaleX(.947)">WeChat</span>
<svg style="left:89.6px;top:6px" width="12" height="9" viewBox="0 0 12 9" fill="none" stroke="#000" stroke-width="1.5"><path d="M.6 3.2a7.6 7.6 0 0 1 10.8 0"/><path d="M2.7 5.3a4.7 4.7 0 0 1 6.6 0"/><circle cx="6" cy="7.6" r="1.2" fill="#000" stroke="none"/></svg>
<span class="t" style="left:173.8px;top:4.5px;font-size:12.5px;color:#0a0a1a;line-height:15px;transform:scaleX(.925)">19:30</span>
<span class="t" style="left:311.5px;top:5px;font-size:10.5px;color:#10203a;line-height:15px;transform:scaleX(.94)">100%</span>
<svg style="left:342px;top:7px" width="27" height="10" viewBox="0 0 27 10"><rect x=".6" y=".6" width="22" height="8.8" rx="1.6" fill="none" stroke="#000" stroke-width="1.2"/><rect x="2.4" y="2.4" width="18.4" height="5.2" rx=".6" fill="#000"/><path d="M24.2 2.8c1.6.5 1.6 3.9 0 4.4z" fill="#000"/></svg>
<div class="abs" style="left:281px;top:24px;width:87px;height:32px;border-radius:16px;background:#dfecff"></div>
<div class="abs" style="left:324px;top:32px;width:1px;height:17px;background:#f2f7ff"></div>
<svg style="left:281px;top:24px" width="87" height="32" viewBox="0 0 87 32"><circle cx="13.4" cy="16.6" r="2.4"/><rect x="18.4" y="13" width="7.2" height="7.2" rx="2.8"/><circle cx="30.6" cy="16.6" r="2.4"/><circle cx="65.4" cy="16.5" r="7.4" fill="none" stroke="#000" stroke-width="2"/><circle cx="65.4" cy="16.5" r="3"/></svg>
<div class="abs" style="left:19px;top:35px;width:82px;height:32px;border-radius:16px;border:1px solid #fff"></div>
<span class="t" style="left:30px;top:42.8px;font-size:15px;color:#fff;line-height:18px;">邀请好友</span>
<svg style="left:0;top:0" width="375" height="667" viewBox="40 87 375 667" font-family="'Liberation Sans','Noto Sans CJK SC',sans-serif"><defs><clipPath id="bclip"><rect x="59" y="172" width="337" height="137" rx="13"/></clipPath><linearGradient id="scg" x1="0" y1="0" x2="0" y2="1"><stop offset="0" stop-color="#500000" stop-opacity="0"/><stop offset=".22" stop-color="#500000" stop-opacity="0"/><stop offset=".5" stop-color="#4a0000" stop-opacity=".42"/><stop offset=".75" stop-color="#400000" stop-opacity=".7"/></linearGradient><radialGradient id="lg" cx=".4" cy=".4" r=".65"><stop offset="0" stop-color="#f48a6c"/><stop offset=".7" stop-color="#ea5c42"/><stop offset="1" stop-color="#d83a28"/></radialGradient><radialGradient id="wsh"><stop offset="0" stop-color="#8a0808" stop-opacity=".55"/><stop offset="1" stop-color="#8a0808" stop-opacity="0"/></radialGradient><g id="sc"><circle r="16.3" fill="#ee2020"/><circle r="15.6" fill="none" stroke="#ff8070" stroke-width=".8"/><circle r="12.8" fill="#d81616"/><circle r="12.3" fill="none" stroke="#ff6a5c" stroke-width=".6"/><circle r="9.4" fill="#ea2222"/><circle r="9" fill="none" stroke="#ff7466" stroke-width=".5"/><circle r="6" fill="#c41212"/><circle r="3" fill="#e02020"/><circle r="16.3" fill="url(#scg)"/></g><clipPath id="c1"><path d="M59.0,335.0 Q59.0,324.0 70.0,324.0 L217.0,324.0 Q228.0,324.0 228.0,335.0 L228.0,494.7 Q228.0,505.7 217.0,505.7 L70.0,505.7 Q59.0,505.7 59.0,494.7Z"/></clipPath><clipPath id="c2"><path d="M251.0,337.5 Q251.5,330.0 259.0,330.0 L365.9,330.0 Q379.6,330.0 382.5,343.4 L394.2,397.2 Q395.8,404.5 388.4,404.5 L255.4,404.5 Q246.9,404.5 247.4,396.0Z"/></clipPath><clipPath id="c3"><path d="M251.0,433.3 Q251.5,425.8 259.0,425.8 L365.9,425.8 Q379.6,425.8 382.5,439.2 L394.2,493.2 Q395.8,500.5 388.4,500.5 L255.4,500.5 Q246.9,500.5 247.4,492.0Z"/></clipPath><clipPath id="c4"><path d="M64.3,531.4 Q64.9,523.0 73.3,523.0 L188.7,523.0 Q202.5,523.0 205.4,536.5 L218.1,596.5 Q219.6,603.7 212.2,603.7 L68.1,603.7 Q59.5,603.7 60.1,595.2Z"/></clipPath><clipPath id="c5"><path d="M244.3,531.4 Q244.9,523.0 253.3,523.0 L368.7,523.0 Q382.5,523.0 385.4,536.5 L398.1,596.5 Q399.6,603.7 392.2,603.7 L248.1,603.7 Q239.5,603.7 240.1,595.2Z"/></clipPath><clipPath id="c6"><path d="M64.3,630.6 Q64.9,622.2 73.3,622.2 L188.8,622.2 Q202.5,622.2 205.4,635.6 L218.0,694.7 Q219.6,702.0 212.2,702.0 L68.1,702.0 Q59.5,702.0 60.1,693.5Z"/></clipPath><clipPath id="c7"><path d="M244.3,630.6 Q244.9,622.2 253.3,622.2 L368.8,622.2 Q382.5,622.2 385.4,635.6 L398.0,694.7 Q399.6,702.0 392.2,702.0 L248.1,702.0 Q239.5,702.0 240.1,693.5Z"/></clipPath></defs>
<g clip-path="url(#bclip)">
<rect x="59" y="172" width="337" height="137" fill="#ff3b3b"/>
<path d="M59,172 L120,172 L59,275Z" fill="#ff5a55" opacity=".3"/>
<path d="M59,172 L88,172 L59,222Z" fill="#ff6a64" opacity=".3"/>
<path d="M396,189 L396,309 L323,309Z" fill="#ff5a55" opacity=".5"/><path d="M370,172 L396,172 L396,189 L323,309 L300,309Z" fill="#ff5a55" opacity=".12"/>
<path d="M59,187 c6,-4 10,-3 14,0 c8,6 16,4 24,6 c6,1 12,-1 18,-3 M79,190 c4,-5 9,-7 13,-9 M97,193 c2,5 4,8 8,10 M104,193 c5,-4 9,-6 14,-7" fill="none" stroke="#6e2a30" stroke-width=".9" stroke-linecap="round"/>
<path d="M59,184 c5,-2 9,-1 12,2 l-3,3 c-3,-2 -6,-2 -9,0z" fill="#3a1a20"/>
<path d="M396,187 c-6,-4 -10,-3 -14,0 c-8,6 -16,4 -24,6 c-6,1 -12,-1 -18,-3 M376,190 c-4,-5 -9,-7 -13,-9 M358,193 c-2,5 -4,8 -8,10 M351,193 c-5,-4 -9,-6 -14,-7" fill="none" stroke="#6e2a30" stroke-width=".9" stroke-linecap="round"/>
<path d="M396,184 c-5,-2 -9,-1 -12,2 l3,3 c3,-2 6,-2 9,0z" fill="#3a1a20"/>
<circle cx="92" cy="181" r="1.3" fill="#ff8a70"/>
<circle cx="105" cy="203" r="1.3" fill="#ff8a70"/>
<circle cx="118" cy="186" r="1.3" fill="#ff8a70"/>
<circle cx="84" cy="196" r="1.3" fill="#ff8a70"/>
<circle cx="363" cy="181" r="1.3" fill="#ff8a70"/>
<circle cx="350" cy="203" r="1.3" fill="#ff8a70"/>
<circle cx="337" cy="186" r="1.3" fill="#ff8a70"/>
<circle cx="371" cy="196" r="1.3" fill="#ff8a70"/>
<circle cx="112" cy="199" r="1.3" fill="#ff8a70"/>
<circle cx="343" cy="199" r="1.3" fill="#ff8a70"/>
<path d="M92,191V203M363,191V203" stroke="#d04a3a" stroke-width=".6"/>
<ellipse cx="92" cy="213.3" rx="10.3" ry="9.8" fill="url(#lg)"/>
<ellipse cx="92" cy="213.3" rx="6" ry="9.8" fill="none" stroke="#f2a050" stroke-width=".7"/>
<ellipse cx="92" cy="213.3" rx="2" ry="9.8" fill="none" stroke="#f2a050" stroke-width=".6"/>
<ellipse cx="89.5" cy="210" rx="5" ry="6" fill="#ff9a7c" opacity=".55"/>
<path d="M95,221 l5.5,6.5 l-7.5,1.5z" fill="#f5a02a"/>
<ellipse cx="363.3" cy="213.3" rx="10.3" ry="9.8" fill="url(#lg)"/>
<ellipse cx="363.3" cy="213.3" rx="6" ry="9.8" fill="none" stroke="#f2a050" stroke-width=".7"/>
<ellipse cx="363.3" cy="213.3" rx="2" ry="9.8" fill="none" stroke="#f2a050" stroke-width=".6"/>
<ellipse cx="365.8" cy="210" rx="5" ry="6" fill="#ff9a7c" opacity=".55"/>
<path d="M360.3,221 l-5.5,6.5 l7.5,1.5z" fill="#f5a02a"/>
<ellipse cx="299" cy="266.5" rx="42.5" ry="5.2" fill="#b4b4b4"/>
<g transform="translate(225,168) scale(.16313)">
<path d="M374.5,225.7 Q395.0,195.0 427.2,212.9 L719.4,375.2 Q755.0,395.0 738.9,432.4 L674.9,580.6 Q660.0,615.0 622.6,616.7 L469.7,623.9 Q445.0,625.0 427.8,607.3 L267.6,443.2 Q245.0,420.0 263.0,393.1Z" fill="#fdf0b4" stroke="#26357c" stroke-width="8"/>
<path d="M420,215 L575,388 L740,402 M575,388 L462,590 Q455,603 438,605" fill="none" stroke="#26357c" stroke-width="6"/>
<path d="M575,392 L742,405 L660,600 L460,605Z" fill="#f5df90" opacity=".55"/>
<path d="M300,330 Q330,250 400,225 L560,390 L450,590 Q300,520 270,420Z" fill="#fff8d8" opacity=".55"/>
<circle cx="395" cy="308" r="23" fill="#a00c10"/>
<circle cx="333" cy="415" r="23" fill="#a00c10"/>
<circle cx="413" cy="398" r="23" fill="#a00c10"/>
<circle cx="495" cy="390" r="23" fill="#a00c10"/>
<circle cx="428" cy="495" r="23" fill="#a00c10"/>
<circle cx="692" cy="458" r="20" fill="#a00c10"/>
<circle cx="620" cy="510" r="20" fill="#a00c10"/>
<circle cx="542" cy="575" r="20" fill="#a00c10"/>
<ellipse cx="582" cy="306" rx="70" ry="27" transform="rotate(35 582 306)" fill="#8c0a0e"/>
<ellipse cx="590" cy="318" rx="52" ry="14" transform="rotate(35 590 318)" fill="#c01a1a"/>
<path d="M248,245 Q215,300 268,348 M195,282 Q165,310 222,362 M770,485 Q760,560 662,552 M780,540 Q770,600 680,595" fill="none" stroke="#141414" stroke-width="8" stroke-linecap="round"/>
</g>
<ellipse cx="172" cy="296" rx="22" ry="8" fill="url(#wsh)"/>
<use href="#sc" x="56.8" y="287.3"/>
<use href="#sc" x="252.4" y="287.3"/>
<use href="#sc" x="317.6" y="287.3"/>
<use href="#sc" x="40.5" y="298"/>
<use href="#sc" x="73.1" y="298"/>
<use href="#sc" x="105.7" y="298"/>
<use href="#sc" x="138.3" y="298"/>
<use href="#sc" x="203.5" y="298"/>
<use href="#sc" x="236.1" y="298"/>
<use href="#sc" x="268.7" y="298"/>
<use href="#sc" x="301.3" y="298"/>
<use href="#sc" x="333.9" y="298"/>
<use href="#sc" x="366.5" y="298"/>
<use href="#sc" x="399.1" y="298"/>
<use href="#sc" x="431.7" y="298"/>
<use href="#sc" x="24.2" y="308.3"/>
<use href="#sc" x="56.8" y="308.3"/>
<use href="#sc" x="89.4" y="308.3"/>
<use href="#sc" x="122.0" y="308.3"/>
<use href="#sc" x="154.6" y="308.3"/>
<use href="#sc" x="187.2" y="308.3"/>
<use href="#sc" x="219.8" y="308.3"/>
<use href="#sc" x="252.4" y="308.3"/>
<use href="#sc" x="285.0" y="308.3"/>
<use href="#sc" x="317.6" y="308.3"/>
<use href="#sc" x="350.2" y="308.3"/>
<use href="#sc" x="382.8" y="308.3"/>
<use href="#sc" x="415.4" y="308.3"/>
<use href="#sc" x="40.5" y="318.6"/>
<use href="#sc" x="73.1" y="318.6"/>
<use href="#sc" x="105.7" y="318.6"/>
<use href="#sc" x="138.3" y="318.6"/>
<use href="#sc" x="170.9" y="318.6"/>
<use href="#sc" x="203.5" y="318.6"/>
<use href="#sc" x="236.1" y="318.6"/>
<use href="#sc" x="268.7" y="318.6"/>
<use href="#sc" x="301.3" y="318.6"/>
<use href="#sc" x="333.9" y="318.6"/>
<use href="#sc" x="366.5" y="318.6"/>
<use href="#sc" x="399.1" y="318.6"/>
<use href="#sc" x="431.7" y="318.6"/>
</g>
<text x="113.8" y="237.6" font-size="30.5" font-weight="700" fill="#fff" textLength="126" lengthAdjust="spacingAndGlyphs">骰子模式</text>
<text x="121" y="261" font-size="14" font-family="'Liberation Serif','Noto Serif CJK SC',serif" font-weight="500" fill="#ffe4e0" textLength="107" lengthAdjust="spacing">比手气 拼技巧</text>
<g clip-path="url(#c1)"><rect x="57.0" y="323.0" width="173.0" height="183.7" fill="#a55fe8"/><path d="M59,417 Q96,501 228,506 L59,506Z" fill="#b17be9"/></g>
<text x="79.5" y="385" font-size="32" font-weight="900" fill="#fff" textLength="128" lengthAdjust="spacingAndGlyphs">指尖模式</text>
<g transform="translate(55,320) scale(.21505)" stroke-linejoin="round" stroke-linecap="round">
<path d="M312,438 A52,52 0 1 1 374,520" fill="none" stroke="#e6001e" stroke-width="15"/>
<path d="M494.6,552 A54,54 0 1 1 562,481" fill="none" stroke="#e6001e" stroke-width="15"/>
<path d="M205,432 C215,408 255,412 252,442 L246,482 L352,446 C388,438 398,480 366,492 L338,502 C358,512 352,542 336,547 C354,557 348,586 333,591 C346,602 340,626 320,632 L232,656 C195,662 158,612 160,560 C160,520 192,455 205,432Z" fill="#f8cdb8" stroke="#333" stroke-width="9"/>
<path d="M496,502 C490,478 522,470 536,492 L560,524 C565,496 596,496 601,512 C612,486 641,490 646,506 C657,481 691,482 696,502 C722,542 741,572 731,602 C720,652 660,682 630,676 L520,651 C490,645 491,611 521,611 L556,606Z" fill="#f8cdb8" stroke="#333" stroke-width="9"/>
</g>
<g clip-path="url(#c2)"><rect x="244.9" y="329.0" width="152.9" height="76.5" fill="#b90ad6"/><path d="M242,347 Q270,398 316,405 L240,405Z" fill="#b846cc"/></g>
<text x="309" y="395.2" font-size="20" font-weight="900" fill="#fff" textLength="79" lengthAdjust="spacingAndGlyphs">酒吧灯光</text>
<g transform="translate(240,318) scale(.13205)">
<path d="M180,405 C200,300 270,200 375,165 L400,200 L330,270 L330,400 L500,455 L560,390 C600,380 600,420 560,420 L520,470 C480,500 400,480 340,520 L285,545Z" fill="#fbe0bc"/>
<path d="M540,300 C585,285 600,320 560,335 L520,345Z M530,375 C570,365 575,400 545,405Z" fill="#fbe0bc"/>
<path d="M60,495 C70,455 110,445 135,455 C150,410 200,395 250,405 C280,440 290,500 285,555 L240,550 C200,530 130,520 60,495Z" fill="#0a6fc4"/>
<path d="M250,405 C280,440 290,500 285,555 L240,550 C260,500 255,450 250,405Z" fill="#084a9a"/>
<path d="M395.4,63.9 Q400.0,42.0 421.9,47.0 L563.7,79.2 Q585.0,84.0 580.3,105.3 L506.8,440.0 Q502.0,462.0 480.1,456.7 L342.6,423.0 Q322.0,418.0 326.3,397.2Z" fill="#4a6078"/>
<path d="M405,72 L568,108 L500,405 L340,368Z" fill="#fafafa"/>
<circle cx="412" cy="420" r="17" fill="#f4f4f4"/>
</g>
<g clip-path="url(#c3)"><rect x="244.9" y="424.8" width="152.9" height="76.7" fill="#000"/><path d="M242,443 Q270,494 316,501 L240,501Z" fill="#333"/></g>
<text x="309" y="491.2" font-size="20" font-weight="900" fill="#fff" textLength="79" lengthAdjust="spacingAndGlyphs">幸运转盘</text>
<g transform="translate(283.3,450)">
<circle r="29.3" fill="#b070f2"/>
<circle r="21.8" fill="#c6fff6"/>
<path d="M0,0 L21.06,-5.64 A21.8,21.8 0 0 1 21.06,5.64Z" fill="#a6f4d6"/>
<path d="M0,0 L15.41,15.41 A21.8,21.8 0 0 1 5.64,21.06Z" fill="#a6f4d6"/>
<path d="M0,0 L-5.64,21.06 A21.8,21.8 0 0 1 -15.41,15.41Z" fill="#a6f4d6"/>
<path d="M0,0 L-21.06,5.64 A21.8,21.8 0 0 1 -21.06,-5.64Z" fill="#a6f4d6"/>
<path d="M0,0 L-15.41,-15.41 A21.8,21.8 0 0 1 -5.64,-21.06Z" fill="#a6f4d6"/>
<path d="M0,0 L5.64,-21.06 A21.8,21.8 0 0 1 15.41,-15.41Z" fill="#a6f4d6"/>
<circle cx="25.46" cy="2.68" r="1.25" fill="#ffd93a"/>
<circle cx="24.23" cy="8.27" r="1.25" fill="#ffd93a"/>
<circle cx="21.78" cy="13.46" r="1.25" fill="#ffd93a"/>
<circle cx="18.24" cy="17.97" r="1.25" fill="#ffd93a"/>
<circle cx="13.78" cy="21.57" r="1.25" fill="#ffd93a"/>
<circle cx="8.64" cy="24.10" r="1.25" fill="#ffd93a"/>
<circle cx="3.06" cy="25.42" r="1.25" fill="#ffd93a"/>
<circle cx="-2.68" cy="25.46" r="1.25" fill="#ffd93a"/>
<circle cx="-8.27" cy="24.23" r="1.25" fill="#ffd93a"/>
<circle cx="-13.46" cy="21.78" r="1.25" fill="#ffd93a"/>
<circle cx="-17.97" cy="18.24" r="1.25" fill="#ffd93a"/>
<circle cx="-21.57" cy="13.78" r="1.25" fill="#ffd93a"/>
<circle cx="-24.10" cy="8.64" r="1.25" fill="#ffd93a"/>
<circle cx="-25.42" cy="3.06" r="1.25" fill="#ffd93a"/>
<circle cx="-25.46" cy="-2.68" r="1.25" fill="#ffd93a"/>
<circle cx="-24.23" cy="-8.27" r="1.25" fill="#ffd93a"/>
<circle cx="-21.78" cy="-13.46" r="1.25" fill="#ffd93a"/>
<circle cx="-18.24" cy="-17.97" r="1.25" fill="#ffd93a"/>
<circle cx="-13.78" cy="-21.57" r="1.25" fill="#ffd93a"/>
<circle cx="-8.64" cy="-24.10" r="1.25" fill="#ffd93a"/>
<circle cx="-3.06" cy="-25.42" r="1.25" fill="#ffd93a"/>
<circle cx="2.68" cy="-25.46" r="1.25" fill="#ffd93a"/>
<circle cx="8.27" cy="-24.23" r="1.25" fill="#ffd93a"/>
<circle cx="13.46" cy="-21.78" r="1.25" fill="#ffd93a"/>
<circle cx="17.97" cy="-18.24" r="1.25" fill="#ffd93a"/>
<circle cx="21.57" cy="-13.78" r="1.25" fill="#ffd93a"/>
<circle cx="24.10" cy="-8.64" r="1.25" fill="#ffd93a"/>
<circle cx="25.42" cy="-3.06" r="1.25" fill="#ffd93a"/>
<path d="M-2.6,-4 L0,-11.5 L2.6,-4Z" fill="#a860ea"/><circle r="6.2" fill="#a860ea"/>
<text x="-3.6" y="1.9" font-size="5" font-weight="bold" fill="#ffd93a">GO</text>
</g>
<g clip-path="url(#c4)"><rect x="57.5" y="522.0" width="164.1" height="82.7" fill="#f5ae16"/><path d="M55,543 Q78,594 134,604 L50,604Z" fill="#f0be56"/></g>
<g clip-path="url(#c5)"><rect x="237.5" y="522.0" width="164.1" height="82.7" fill="#a10a14"/><path d="M235,543 Q258,594 314,604 L230,604Z" fill="#9a343c"/></g>
<g clip-path="url(#c6)"><rect x="57.5" y="621.2" width="164.1" height="81.8" fill="#c99e62"/><path d="M55,641 Q78,693 134,702.5 L50,702.5Z" fill="#dcbc8c"/></g>
<g clip-path="url(#c7)"><rect x="237.5" y="621.2" width="164.1" height="81.8" fill="#42ba98"/><path d="M235,641 Q258,693 314,702.5 L230,702.5Z" fill="#66ceb6"/></g>
<text x="123.5" y="591.8" font-size="21" font-weight="900" fill="#fff" textLength="84.5" lengthAdjust="spacingAndGlyphs">喝酒大哥</text>
<text x="302" y="591.8" font-size="21" font-weight="900" fill="#fff" textLength="84" lengthAdjust="spacingAndGlyphs">咬手鳄鱼</text>
<g transform="skewX(-12)"><text x="215" y="654.5" font-size="20" font-weight="900" fill="#fff" textLength="93" lengthAdjust="spacingAndGlyphs">重启人生</text><text x="396" y="654.5" font-size="20" font-weight="900" fill="#fff" textLength="92" lengthAdjust="spacingAndGlyphs">关注我们</text></g>
<text x="147" y="679.2" font-size="16" font-weight="900" fill="#fff" textLength="54.5" lengthAdjust="spacingAndGlyphs">模拟器</text>
<text x="327.5" y="679.2" font-size="16" font-weight="900" fill="#fff" textLength="54" lengthAdjust="spacingAndGlyphs">不迷路</text>
<g transform="translate(55,512) scale(.14493)">
<path d="M95,272 L385,350 L405,382 L380,372 L95,302Z" fill="#7e7e7e" stroke="#3a3a3a" stroke-width="7" stroke-linejoin="round"/>
<path d="M138,400 C160,310 340,300 364,392 L374,445 L338,460 L330,490 Q250,505 172,490 L133,445Z" fill="#141414"/>
<path d="M215,350 C225,420 270,430 285,350" fill="none" stroke="#b08a3a" stroke-width="7"/>
<ellipse cx="355" cy="355" rx="24" ry="22" fill="#f6d8c2"/>
<ellipse cx="275" cy="222" rx="118" ry="130" fill="#f8dcc8"/>
<path d="M148,220 C125,75 245,15 330,42 C405,65 430,140 408,220 C398,155 362,128 300,112 C240,102 190,118 172,178Z" fill="#0a0a0a"/>
<path d="M190,150 L290,160 L300,175 L385,185 L375,235 L320,225 L295,195 L270,200 L240,195 L205,180Z" fill="#0a0a0a"/>
<path d="M240,258 Q268,240 296,262" fill="none" stroke="#7a4a3a" stroke-width="7"/>
</g>
<g transform="translate(230,512) scale(.14493)">
<circle cx="232" cy="62" r="13" fill="#3f8f3a"/>
<circle cx="268" cy="45" r="13" fill="#3f8f3a"/>
<circle cx="300" cy="40" r="13" fill="#3f8f3a"/>
<circle cx="165" cy="110" r="13" fill="#3f8f3a"/>
<circle cx="150" cy="160" r="13" fill="#3f8f3a"/>
<circle cx="152" cy="215" r="13" fill="#3f8f3a"/>
<circle cx="160" cy="265" r="13" fill="#3f8f3a"/>
<circle cx="150" cy="315" r="13" fill="#3f8f3a"/>
<circle cx="120" cy="345" r="13" fill="#3f8f3a"/>
<path d="M190,300 C150,360 110,372 66,352 C58,400 130,420 200,388Z" fill="#7dab2d"/>
<path d="M160,110 C150,40 290,20 340,80 C380,110 395,170 430,215 C455,260 420,300 370,290 L345,285 C365,330 365,390 340,400 L372,432 L312,432 L300,405 L240,405 L215,438 L168,428 L190,395 C160,340 170,260 175,230 C150,200 150,150 160,110Z" fill="#7dab2d"/>
<path d="M255,265 C300,255 350,290 348,340 C345,385 300,410 260,395 C235,360 238,300 255,265Z" fill="#c8f02e"/>
<path d="M250,300 H345 M245,330 H350 M245,360 H345 M255,388 H325" stroke="#8fc424" stroke-width="7"/>
<path d="M195,270 C185,320 190,360 200,395 M238,270 C232,320 236,360 242,395" fill="none" stroke="#4f9636" stroke-width="5"/>
<ellipse cx="260" cy="150" rx="47" ry="40" fill="#2f6b19"/><ellipse cx="355" cy="152" rx="38" ry="33" fill="#2f6b19"/>
<ellipse cx="258" cy="124" rx="47" ry="36" fill="#eef0f2"/><ellipse cx="356" cy="130" rx="38" ry="30" fill="#eef0f2"/>
<circle cx="262" cy="132" r="19" fill="#5a5a72"/><circle cx="352" cy="137" r="16" fill="#5a5a72"/>
<path d="M225,75 Q260,55 290,62 M330,78 Q355,80 372,98" fill="none" stroke="#3f7f24" stroke-width="9" stroke-linecap="round"/>
<circle cx="372" cy="228" r="7" fill="#4f9636"/><circle cx="418" cy="235" r="7" fill="#4f9636"/>
<path d="M355,265 H425" stroke="#5f9a2c" stroke-width="4"/>
</g>
</svg>
</div>
</body>
</html>
